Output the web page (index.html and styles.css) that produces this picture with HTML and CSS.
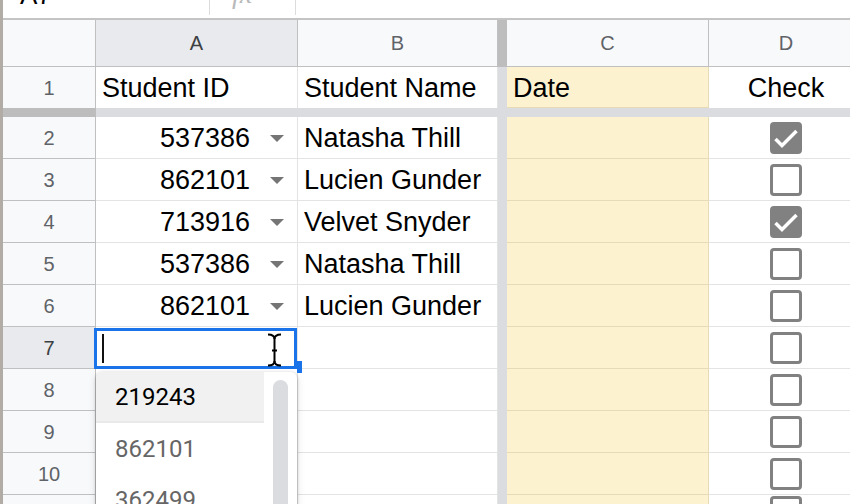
FILE: index.html
```html
<!DOCTYPE html>
<html>
<head>
<meta charset="utf-8">
<link rel="stylesheet" href="styles.css">
</head>
<body>
<div class="app">
  <div class="formula-bar">
    <div class="namebox">A7</div>
    <div class="fb-sep"></div>
    <div class="fx">fx</div>
    <div class="fb-sep"></div>
  </div>

  <div class="sheet">
    <!-- column headers -->
    <div class="corner"></div>
    <div class="ch sel">A</div>
    <div class="ch">B</div>
    <div class="vd dark"></div>
    <div class="ch">C</div>
    <div class="ch">D</div>

    <!-- row 1 (frozen) -->
    <div class="rh first">1</div>
    <div class="c top">Student ID</div>
    <div class="c top">Student Name</div>
    <div class="vd"></div>
    <div class="c y top">Date</div>
    <div class="c d top">Check</div>

    <!-- frozen row divider -->
    <div class="hd-head"></div>
    <div class="hd"></div>

    <!-- row 2 -->
    <div class="rh">2</div>
    <div class="c a"><span>537386</span><span class="dd"></span></div>
    <div class="c">Natasha Thill</div>
    <div class="vd"></div>
    <div class="c y"></div>
    <div class="c d"><span class="cb on"><svg viewBox="0 0 26 26" width="26" height="26"><polyline points="2.5,14 9,20.5 23.5,6" /></svg></span></div>

    <!-- row 3 -->
    <div class="rh">3</div>
    <div class="c a"><span>862101</span><span class="dd"></span></div>
    <div class="c">Lucien Gunder</div>
    <div class="vd"></div>
    <div class="c y"></div>
    <div class="c d"><span class="cb"></span></div>

    <!-- row 4 -->
    <div class="rh">4</div>
    <div class="c a"><span>713916</span><span class="dd"></span></div>
    <div class="c">Velvet Snyder</div>
    <div class="vd"></div>
    <div class="c y"></div>
    <div class="c d"><span class="cb on"><svg viewBox="0 0 26 26" width="26" height="26"><polyline points="2.5,14 9,20.5 23.5,6" /></svg></span></div>

    <!-- row 5 -->
    <div class="rh">5</div>
    <div class="c a"><span>537386</span><span class="dd"></span></div>
    <div class="c">Natasha Thill</div>
    <div class="vd"></div>
    <div class="c y"></div>
    <div class="c d"><span class="cb"></span></div>

    <!-- row 6 -->
    <div class="rh">6</div>
    <div class="c a"><span>862101</span><span class="dd"></span></div>
    <div class="c">Lucien Gunder</div>
    <div class="vd"></div>
    <div class="c y"></div>
    <div class="c d"><span class="cb"></span></div>

    <!-- row 7: active cell being edited -->
    <div class="rh sel">7</div>
    <div class="c active">
      <span class="caret"></span>
      <svg class="ibeam" viewBox="0 0 16 34" width="16" height="34">
        <path d="M1 1.5 C5 1.5 7.5 2.5 7.5 6 C7.5 2.5 10 1.5 14 1.5" />
        <path d="M7.5 5 V29" />
        <path d="M5 17.5 H10" />
        <path d="M1 32.5 C5 32.5 7.5 31.5 7.5 28 C7.5 31.5 10 32.5 14 32.5" />
      </svg>
      <span class="handle"></span>
      <div class="menu">
        <div class="opt hl">219243</div>
        <div class="opt">862101</div>
        <div class="opt">362499</div>
        <div class="scroll"></div>
      </div>
    </div>
    <div class="c"></div>
    <div class="vd"></div>
    <div class="c y"></div>
    <div class="c d"><span class="cb"></span></div>

    <!-- row 8 -->
    <div class="rh">8</div>
    <div class="c"></div>
    <div class="c"></div>
    <div class="vd"></div>
    <div class="c y"></div>
    <div class="c d"><span class="cb"></span></div>

    <!-- row 9 -->
    <div class="rh">9</div>
    <div class="c"></div>
    <div class="c"></div>
    <div class="vd"></div>
    <div class="c y"></div>
    <div class="c d"><span class="cb"></span></div>

    <!-- row 10 -->
    <div class="rh">10</div>
    <div class="c"></div>
    <div class="c"></div>
    <div class="vd"></div>
    <div class="c y"></div>
    <div class="c d"><span class="cb"></span></div>

    <!-- row 11 -->
    <div class="rh">11</div>
    <div class="c"></div>
    <div class="c"></div>
    <div class="vd"></div>
    <div class="c y"></div>
    <div class="c d"><span class="cb"></span></div>
  </div>
</div>
</body>
</html>
```

FILE: styles.css
```css
html, body {
  margin: 0;
  padding: 0;
  background: #fff;
}

body {
  width: 850px;
  height: 504px;
  overflow: hidden;
  font-family: "Liberation Sans", Arial, sans-serif;
}

.app {
  border-left: 3px solid #b1aca6;
  height: 504px;
  box-sizing: border-box;
}

/* formula bar (scrolled mostly out of view) */
.formula-bar {
  height: 18px;
  border-bottom: 2px solid #c4c4c4;
  display: flex;
  align-items: flex-end;
  overflow: hidden;
}

.namebox {
  width: 206px;
  box-sizing: border-box;
  padding-left: 17px;
  padding-bottom: 10px;
  font-size: 26px;
  line-height: 26px;
  color: #000;
}

.fb-sep {
  width: 1px;
  height: 15px;
  align-self: flex-start;
  background: #dcdcdc;
}

.fx {
  width: 85px;
  box-sizing: border-box;
  padding-left: 22px;
  padding-bottom: 11px;
  font-family: "Liberation Serif", serif;
  font-style: italic;
  font-size: 28px;
  line-height: 26px;
  color: #b9b9b9;
}

/* grid */
.sheet {
  display: grid;
  grid-template-columns: 93px 202px 200px 9px 202px 155px;
  grid-template-rows: 47px 41px 9px repeat(9, 42px);
}

.sheet > div {
  box-sizing: border-box;
}

.corner {
  background: #f8f9fa;
  border-right: 1px solid #c0c0c0;
  border-bottom: 1px solid #c0c0c0;
}

.ch {
  background: #f8f9fa;
  border-right: 1px solid #c0c0c0;
  border-bottom: 1px solid #c0c0c0;
  display: flex;
  align-items: center;
  justify-content: center;
  padding-top: 1px;
  font-size: 20px;
  color: #5f6368;
}

.ch.sel {
  background: #e8eaed;
  color: #3c4043;
}

.rh {
  background: #f8f9fa;
  border-right: 1px solid #c0c0c0;
  border-bottom: 1px solid #c0c0c0;
  display: flex;
  align-items: center;
  justify-content: center;
  padding-top: 1px;
  font-size: 20px;
  color: #5f6368;
}

.rh.first {
  border-bottom: none;
}

.rh.sel {
  background: #e8eaed;
  color: #3c4043;
}

/* frozen dividers */
.vd {
  background: #dadce0;
}

.vd.dark {
  background: #bdbdbd;
}

.hd-head {
  background: #bdbdbd;
}

.hd {
  grid-column: 2 / -1;
  background: #dadce0;
}

/* cells */
.c {
  border-right: 1px solid #e2e3e3;
  border-bottom: 1px solid #e2e3e3;
  display: flex;
  align-items: center;
  padding: 1px 6px 0;
  font-size: 27px;
  color: #000;
  white-space: nowrap;
}

.c.top {
  border-bottom: none;
  padding-top: 2px;
}

.c.y {
  background: #fcf2d0;
  border-right-color: #e6dbb6;
  border-bottom-color: #e6dbb6;
}

.c.y.top {
  border-bottom: 1px solid #e6dbb6;
}

.c.a {
  justify-content: flex-end;
  gap: 20px;
  padding-right: 13px;
}

.c.d {
  justify-content: center;
  padding: 0;
}

.c.d.top {
  padding-top: 2px;
}

/* data validation arrow */
.dd {
  width: 0;
  height: 0;
  border-left: 7px solid transparent;
  border-right: 7px solid transparent;
  border-top: 7px solid #757575;
}

/* checkboxes */
.cb {
  width: 32px;
  height: 32px;
  box-sizing: border-box;
  border: 3px solid #818181;
  border-radius: 4px;
  display: block;
  margin-top: 1px;
}

.cb.on {
  background: #818181;
}

.cb svg {
  display: block;
}

.cb polyline {
  fill: none;
  stroke: #fff;
  stroke-width: 3.5;
}

/* active cell */
.c.active {
  position: relative;
  z-index: 2;
  padding: 0 6px;
}

.c.active::after {
  content: "";
  position: absolute;
  left: -2px;
  top: 1px;
  width: 203px;
  height: 41px;
  box-sizing: border-box;
  border: 3px solid #1a73e8;
}

.caret {
  display: block;
  width: 2px;
  height: 29px;
  background: #111;
  margin-top: 1px;
}

.ibeam {
  position: absolute;
  left: 171px;
  top: 6px;
  z-index: 3;
}

.ibeam path {
  fill: none;
  stroke: #000;
  stroke-width: 2;
}

.handle {
  position: absolute;
  left: 201px;
  top: 34px;
  width: 5px;
  height: 12px;
  background: #1a73e8;
  z-index: 1;
}

/* autocomplete menu */
.menu {
  position: absolute;
  left: 0;
  top: 45px;
  width: 201px;
  height: 200px;
  background: #fff;
  border-radius: 6px 6px 0 0;
  box-shadow: 0 1px 3px rgba(0, 0, 0, 0.3), 0 3px 8px rgba(0, 0, 0, 0.12);
  z-index: 4;
  font-family: Roboto, "Liberation Sans", sans-serif;
}

.opt {
  width: 168px;
  height: 51px;
  box-sizing: border-box;
  padding-left: 19px;
  display: flex;
  align-items: center;
  font-size: 24px;
  color: #666;
}

.opt.hl {
  background: #f1f1f1;
  color: #000;
  border-bottom: 2px solid #e9e9e9;
  border-radius: 6px 0 0 0;
}

.scroll {
  position: absolute;
  left: 177px;
  top: 8px;
  width: 15px;
  height: 200px;
  border-radius: 8px;
  background: #dadce0;
}
```
